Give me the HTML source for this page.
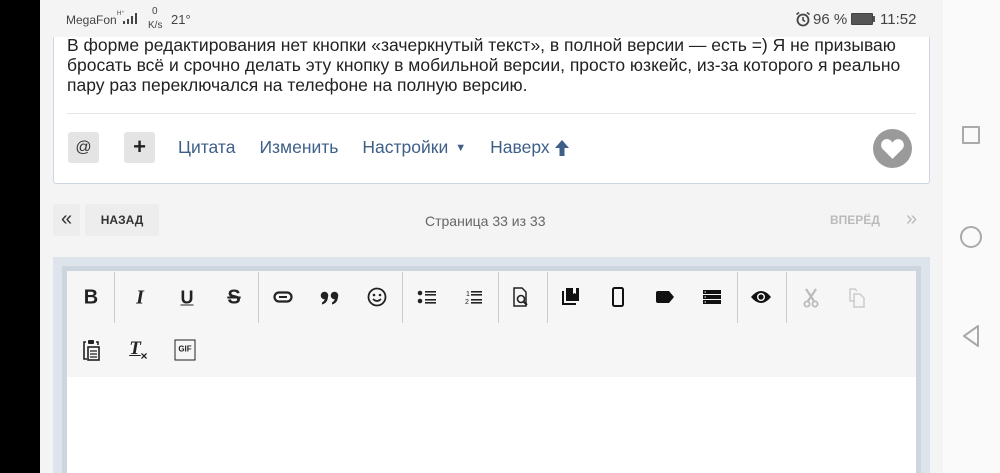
<!DOCTYPE html>
<html><head><meta charset="utf-8"><style>
*{margin:0;padding:0;box-sizing:border-box}
body{width:1000px;height:473px;overflow:hidden;position:relative;background:#f4f4f4;font-family:"Liberation Sans","DejaVu Sans",sans-serif}
.a{position:absolute}
.ic{position:absolute;transform:translate(-50%,-50%);color:#222}
</style></head><body>
<div class="a" style="left:0;top:0;width:40px;height:473px;background:#000"></div>
<div class="a" style="left:943px;top:0;width:57px;height:473px;background:#fafafa"></div>
<div class="a" style="left:962px;top:126px;width:18px;height:18px;border:2px solid #aaa;border-radius:1px"></div>
<div class="a" style="left:960px;top:226px;width:22px;height:22px;border:2px solid #aaa;border-radius:50%"></div>
<svg class="a" style="left:960px;top:324px" width="22" height="24"><path d="M18 2 L4 12 L18 22 Z" fill="none" stroke="#aaa" stroke-width="2" stroke-linejoin="round"/></svg>

<div class="a" style="left:53px;top:20px;width:877px;height:164px;background:#fff;border:1px solid #cdd6e2;border-top:none;border-radius:0 0 3px 3px"></div>
<div class="a" style="left:67px;top:35px;font-size:17.5px;line-height:20px;color:#222;width:870px;white-space:nowrap">В форме редактирования нет кнопки «зачеркнутый текст», в полной версии — есть =) Я не призываю<br>бросать всё и срочно делать эту кнопку в мобильной версии, просто юзкейс, из-за которого я реально<br>пару раз переключался на телефоне на полную версию.</div>
<div class="a" style="left:67px;top:113px;width:849px;height:1px;background:#e6e6e6"></div>
<div class="a" style="left:68px;top:132px;width:31px;height:31px;background:#e4e4e4;border-radius:3px;font-size:16px;color:#333;text-align:center;line-height:31px">@</div>
<div class="a" style="left:124px;top:132px;width:31px;height:31px;background:#e4e4e4;border-radius:3px;font-size:22px;font-weight:bold;color:#222;text-align:center;line-height:30px">+</div>
<div class="a" style="left:178px;top:137px;font-size:17.5px;color:#3d5f88;white-space:nowrap">Цитата<span style="margin-left:24px">Изменить</span><span style="margin-left:24px">Настройки</span><span style="font-size:11px;margin-left:7px;position:relative;top:-2px">▼</span><span style="margin-left:24px">Наверх</span></div>
<svg class="a" style="left:554px;top:139px" width="16" height="18" viewBox="0 0 16 18"><path d="M8 1 L15 9 H10.5 V17 H5.5 V9 H1 Z" fill="#3d5f88"/></svg>
<div class="a" style="left:873px;top:129px;width:39px;height:39px;border-radius:50%;background:#9a9a9a"></div>
<svg class="a" style="left:880px;top:137px" width="25" height="23" viewBox="0 0 24 22"><path d="M12 21 L2.5 11.5 C-0.5 8 1.5 2 6.5 2 C9 2 11 3.5 12 5.5 C13 3.5 15 2 17.5 2 C22.5 2 24.5 8 21.5 11.5 Z" fill="#fff"/></svg>

<div class="a" style="left:40px;top:0;width:903px;height:37px;background:#f4f4f4"></div>
<div class="a" style="left:66px;top:13px;font-size:12px;color:#444">MegaFon</div>
<div class="a" style="left:117px;top:10px;font-size:6px;color:#444">H⁺</div>
<svg class="a" style="left:121px;top:12px" width="22" height="13"><rect x="2" y="9" width="2" height="3" fill="#444"/><rect x="6" y="7" width="2" height="5" fill="#444"/><rect x="10" y="4" width="2" height="8" fill="#444"/><rect x="14" y="1" width="2" height="11" fill="#444"/></svg>
<div class="a" style="left:152px;top:6px;font-size:10px;color:#444">0</div>
<div class="a" style="left:148px;top:20px;font-size:10px;color:#444">K/s</div>
<div class="a" style="left:171px;top:12px;font-size:13px;color:#444">21°</div>
<svg class="a" style="left:795px;top:11px" width="16" height="16" viewBox="0 0 16 16"><circle cx="8" cy="9" r="5.5" fill="none" stroke="#444" stroke-width="1.8"/><path d="M8 6 V9 L10 10.5 M1.5 3.5 L4 1.5 M14.5 3.5 L12 1.5" stroke="#444" stroke-width="1.6" fill="none"/></svg>
<div class="a" style="left:813px;top:11px;font-size:15px;color:#444">96 %</div>
<div class="a" style="left:851px;top:13px;width:22px;height:12px;background:#555;border:1px solid #444;border-radius:1px"></div>
<div class="a" style="left:873px;top:16px;width:2px;height:6px;background:#555"></div>
<div class="a" style="left:880px;top:11px;font-size:15px;color:#444">11:52</div>

<div class="a" style="left:53px;top:204px;width:27px;height:32px;background:#ededed;border-radius:2px;text-align:center;line-height:30px;font-size:20px;color:#333">«</div>
<div class="a" style="left:85px;top:204px;width:74px;height:32px;background:#ededed;border-radius:2px;text-align:center;line-height:32px;font-size:12px;font-weight:bold;color:#333">НАЗАД</div>
<div class="a" style="left:425px;top:213px;font-size:14px;color:#666">Страница 33 из 33</div>
<div class="a" style="left:830px;top:213px;font-size:12px;font-weight:bold;color:#bbb">ВПЕРЁД</div>
<div class="a" style="left:906px;top:208px;font-size:20px;color:#bbb">»</div>

<div class="a" style="left:53px;top:257px;width:877px;height:216px;background:#dde4ec"></div>
<div class="a" style="left:62px;top:266px;width:859px;height:207px;background:#cdd5df"></div>
<div class="a" style="left:67px;top:271px;width:849px;height:106px;background:#f6f6f6"></div>
<div class="a" style="left:67px;top:377px;width:849px;height:96px;background:#fff"></div>
<div class="a" style="left:114px;top:272px;width:1px;height:51px;background:#ccc"></div>
<div class="a" style="left:258px;top:272px;width:1px;height:51px;background:#ccc"></div>
<div class="a" style="left:402px;top:272px;width:1px;height:51px;background:#ccc"></div>
<div class="a" style="left:498px;top:272px;width:1px;height:51px;background:#ccc"></div>
<div class="a" style="left:547px;top:272px;width:1px;height:51px;background:#ccc"></div>
<div class="a" style="left:737px;top:272px;width:1px;height:51px;background:#ccc"></div>
<div class="a" style="left:786px;top:272px;width:1px;height:51px;background:#ccc"></div>

<div class="ic" style="left:91px;top:298px;font-size:20px;font-weight:bold">B</div>
<div class="ic" style="left:140px;top:298px;font-size:20px;font-weight:bold;font-style:italic;font-family:'Liberation Serif',serif">I</div>
<div class="ic" style="left:187px;top:298px;font-size:18px;font-weight:bold;text-decoration:underline">U</div>
<div class="ic" style="left:234px;top:298px;font-size:20px;font-weight:bold;text-decoration:line-through">S</div>
<svg class="ic" style="left:283px;top:297px" width="20" height="12" viewBox="0 0 20 12"><rect x="1.5" y="1.5" width="17" height="9" rx="4.5" fill="none" stroke="#222" stroke-width="2.2"/><path d="M6 6 H14" stroke="#222" stroke-width="2"/></svg>
<svg class="ic" style="left:330px;top:298px" width="20" height="14" viewBox="0 0 20 14"><circle cx="4.5" cy="4.5" r="3.8" fill="#222"/><path d="M8 5 Q8 12 2 13.5 L2 11.5 Q5 10 5 6 Z" fill="#222"/><circle cx="14.5" cy="4.5" r="3.8" fill="#222"/><path d="M18 5 Q18 12 12 13.5 L12 11.5 Q15 10 15 6 Z" fill="#222"/></svg>
<svg class="ic" style="left:377px;top:297px" width="20" height="20" viewBox="0 0 20 20"><circle cx="10" cy="10" r="8.5" fill="none" stroke="#222" stroke-width="1.8"/><circle cx="7" cy="8" r="1.3" fill="#222"/><circle cx="13" cy="8" r="1.3" fill="#222"/><path d="M6 12 Q10 16 14 12" fill="none" stroke="#222" stroke-width="1.6"/></svg>
<svg class="ic" style="left:427px;top:297px" width="20" height="16" viewBox="0 0 20 16"><circle cx="3" cy="4" r="2.3" fill="#222"/><circle cx="3" cy="12" r="2.3" fill="#222"/><rect x="8" y="2" width="11" height="1.6" fill="#222"/><rect x="8" y="5" width="11" height="1.6" fill="#222"/><rect x="8" y="10" width="11" height="1.6" fill="#222"/><rect x="8" y="13" width="11" height="1.6" fill="#222"/></svg>
<svg class="ic" style="left:474px;top:297px" width="18" height="16" viewBox="0 0 18 16"><text x="1" y="7" font-size="7" fill="#222" font-family="Liberation Sans">1</text><text x="0" y="15" font-size="7" fill="#222" font-family="Liberation Sans">2</text><rect x="6" y="2" width="11" height="1.6" fill="#222"/><rect x="6" y="5" width="11" height="1.6" fill="#222"/><rect x="6" y="10" width="11" height="1.6" fill="#222"/><rect x="6" y="13" width="11" height="1.6" fill="#222"/></svg>
<svg class="ic" style="left:521px;top:297px" width="18" height="20" viewBox="0 0 18 20"><path d="M2 1 H10 L14 5 V19 H2 Z" fill="none" stroke="#222" stroke-width="1.5"/><circle cx="9" cy="12" r="3.5" fill="none" stroke="#222" stroke-width="1.6"/><path d="M11.5 14.5 L15 18" stroke="#222" stroke-width="2"/></svg>
<svg class="ic" style="left:571px;top:296px" width="18" height="18" viewBox="0 0 18 18"><path d="M1 4 V17 H14" fill="none" stroke="#111" stroke-width="2"/><rect x="4" y="1" width="13" height="13" fill="#111"/><path d="M11 1 V7 L12.5 6 L14 7 V1" fill="#fff"/></svg>
<svg class="ic" style="left:618px;top:297px" width="12" height="20" viewBox="0 0 12 20"><rect x="1" y="1" width="10" height="18" rx="1.5" fill="none" stroke="#111" stroke-width="2"/></svg>
<svg class="ic" style="left:665px;top:297px" width="18" height="12" viewBox="0 0 18 12"><path d="M2 0 H13 L18 6 L13 12 H2 Q0 12 0 10 V2 Q0 0 2 0Z" fill="#111"/></svg>
<svg class="ic" style="left:712px;top:297px" width="18" height="14" viewBox="0 0 18 14"><rect x="0" y="0" width="18" height="4" fill="#111"/><rect x="0" y="5" width="18" height="4" fill="#111"/><rect x="0" y="10" width="18" height="4" fill="#111"/><rect x="1.5" y="1.5" width="1.5" height="1" fill="#fff"/><rect x="1.5" y="6.5" width="1.5" height="1" fill="#fff"/><rect x="1.5" y="11.5" width="1.5" height="1" fill="#fff"/></svg>
<svg class="ic" style="left:761px;top:297px" width="22" height="14" viewBox="0 0 22 14"><path d="M1 7 Q11 -5 21 7 Q11 19 1 7Z" fill="#111"/><circle cx="11" cy="7" r="4" fill="#fff"/><circle cx="11" cy="7" r="2.6" fill="#111"/></svg>
<svg class="ic" style="left:811px;top:298px" width="18" height="20" viewBox="0 0 18 20"><path d="M4 1 L12 13 M14 1 L6 13" stroke="#bbb" stroke-width="2.2"/><circle cx="5" cy="16" r="2.6" fill="none" stroke="#bbb" stroke-width="1.8"/><circle cx="13" cy="16" r="2.6" fill="none" stroke="#bbb" stroke-width="1.8"/></svg>
<svg class="ic" style="left:857px;top:298px" width="18" height="20" viewBox="0 0 18 20"><path d="M7 13 H2 V1 H7 L9 3" fill="none" stroke="#ccc" stroke-width="1.5"/><path d="M6 6 H12 L16 10 V19 H6 Z" fill="none" stroke="#ccc" stroke-width="1.5"/></svg>

<svg class="ic" style="left:91px;top:350px" width="18" height="22" viewBox="0 0 18 22"><path d="M4 3 H2 V20 H5" fill="none" stroke="#222" stroke-width="1.6"/><rect x="6" y="1" width="6" height="4" rx="1" fill="#222"/><path d="M14 3 H16 V6" fill="none" stroke="#222" stroke-width="1.6"/><rect x="6" y="8" width="11" height="13" fill="none" stroke="#222" stroke-width="1.6"/><path d="M8 12 H15 M8 15 H15 M8 18 H15" stroke="#222" stroke-width="1.3"/></svg>
<div class="ic" style="left:135px;top:349px;font-size:19px;font-weight:bold;font-style:italic;font-family:'Liberation Serif',serif;text-decoration:underline">T</div>
<div class="ic" style="left:144px;top:356px;font-size:12px;font-weight:bold">×</div>
<div class="ic" style="left:185px;top:350px;width:21px;height:21px;border:1.5px solid #222;font-size:8px;font-weight:bold;text-align:center;line-height:18px">GIF</div>
</body></html>
